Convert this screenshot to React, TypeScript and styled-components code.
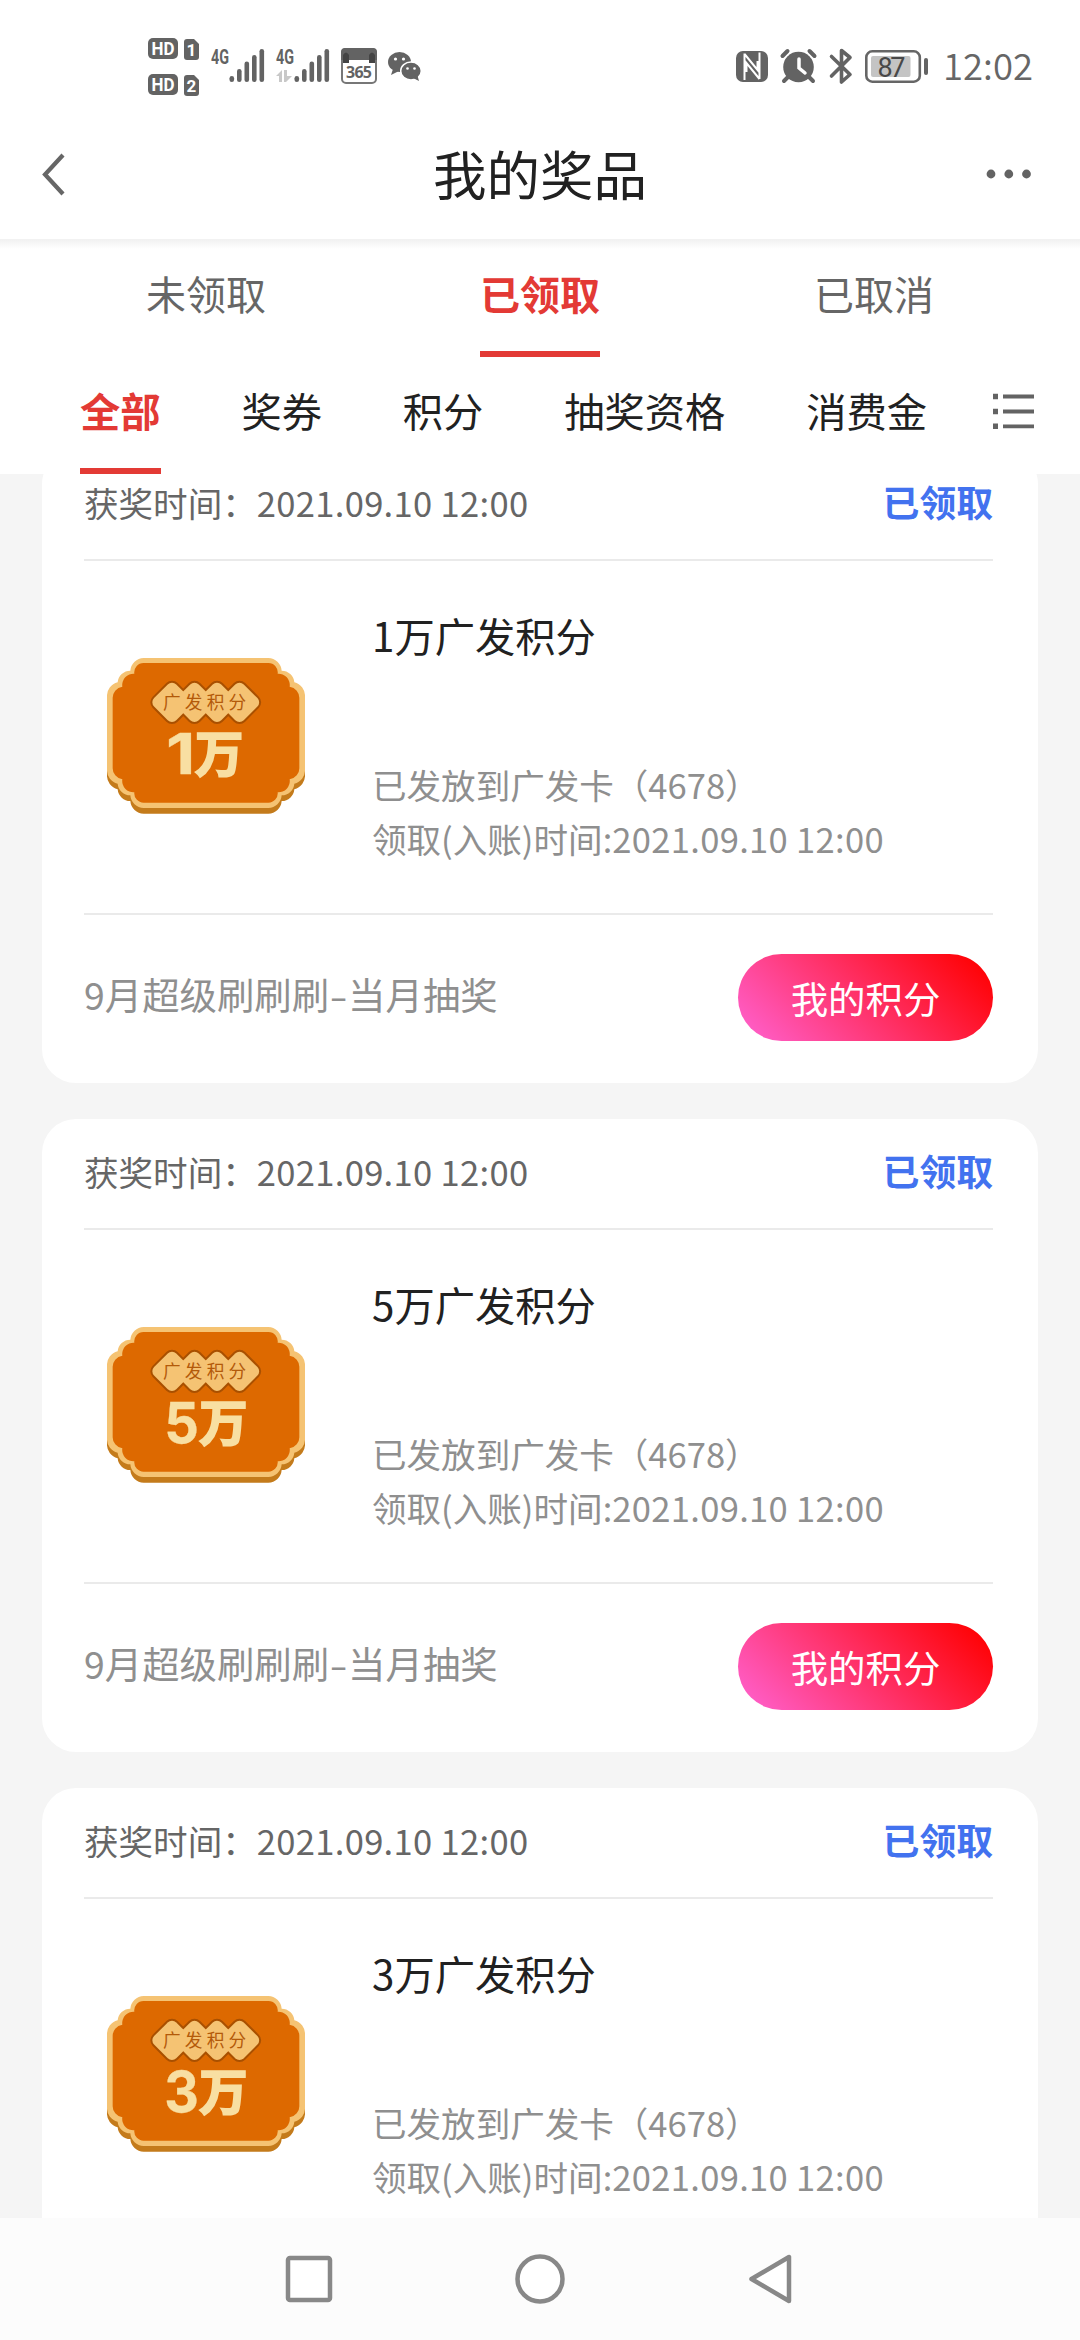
import React from "react";
import styled, { createGlobalStyle, css } from "styled-components";

const GlobalStyle = createGlobalStyle`
  * { box-sizing: border-box; }
  body {
    margin: 0;
    background: #f5f5f5;
    font-family: "Noto Sans CJK SC", "Noto Sans", sans-serif;
  }
`;

const Screen = styled.div`
  width: 1080px;
  height: 2340px;
  display: flex;
  flex-direction: column;
  overflow: hidden;
  background: #f5f5f5;
`;

const StatusBar = styled.div`
  flex: none;
  height: 112px;
  display: flex;
  justify-content: space-between;
  padding: 0 49px 0 148px;
  background: #fff;
`;

const StatusGroup = styled.div<{ $gap: number }>`
  display: flex;
  gap: ${(p) => p.$gap}px;
`;

const Glyph = styled.svg`
  display: block;
  flex: none;
  overflow: visible;
  fill: #636363;
`;

const Clock = styled.div`
  width: 88px;
  margin-left: 1px;
  font-family: "Noto Sans CJK SC", sans-serif;
  font-weight: 350;
  font-size: 36.5px;
  line-height: 130px;
  letter-spacing: 0;
  white-space: nowrap;
  color: #666;
`;

const Header = styled.header`
  flex: none;
  height: 128px;
  display: flex;
  align-items: center;
  justify-content: space-between;
  padding: 0 48px 0 41px;
  background: #fff;
  border-bottom: 1px solid #f2f2f2;
`;

const Title = styled.h1`
  margin: 0;
  padding: 0 0 5px 28px;
  font-weight: 400;
  font-size: 53.5px;
  line-height: 80px;
  color: #212121;
`;

const Tabs = styled.nav`
  flex: none;
  height: 117px;
  display: grid;
  grid-template-columns: repeat(3, 334px);
  justify-content: center;
  justify-items: center;
  background: linear-gradient(#f2f2f2, #fff 9px);
`;

const activeText = css`
  color: #e33a35;
  font-weight: 700;
  border-bottom-color: #e33a35;
`;

const Tab = styled.div<{ $active?: boolean }>`
  height: 117px;
  padding-top: 21px;
  font-size: 40px;
  line-height: 64px;
  color: #666;
  border-bottom: 6px solid transparent;
  ${(p) => p.$active && activeText}
`;

const Filters = styled.nav`
  flex: none;
  height: 117px;
  display: flex;
  justify-content: space-between;
  padding: 0 45px 0 80px;
  background: #fff;
`;

const FilterList = styled.div`
  display: flex;
  gap: 80.8px;
`;

const Filter = styled.div<{ $active?: boolean }>`
  height: 117px;
  padding-top: 21px;
  font-size: 40.3px;
  line-height: 64px;
  color: #212121;
  white-space: nowrap;
  border-bottom: 6px solid transparent;
  ${(p) => p.$active && activeText}
`;

const Feed = styled.main`
  flex: 1;
  min-height: 0;
  overflow: hidden;
  padding: 0 42px;
`;

const Cards = styled.div`
  display: flex;
  flex-direction: column;
  gap: 36px;
  margin-top: -24px;
`;

const Card = styled.article`
  height: 633px;
  flex: none;
  padding: 0 45px 0 42px;
  border-radius: 34px;
  background: #fff;
`;

const CardHead = styled.div`
  height: 111px;
  display: flex;
  align-items: center;
  justify-content: space-between;
  padding-bottom: 5px;
  border-bottom: 2px solid #eaeaea;
`;

const WonAt = styled.div`
  font-size: 34.56px;
  line-height: 52px;
  color: #666;
`;

const Stamp = styled.span`
  letter-spacing: 0.32px;
`;

const State = styled.div`
  font-size: 36.8px;
  font-weight: 700;
  line-height: 56px;
  padding-bottom: 2px;
  color: #4272ef;
`;

const CardBody = styled.div`
  height: 354px;
  display: flex;
  border-bottom: 2px solid #eaeaea;
`;

const Badge = styled.svg`
  display: block;
  flex: none;
  width: 198px;
  height: 156px;
  margin: 97px 67px 0 23px;
`;

const Details = styled.div`
  padding-top: 44px;
`;

const PrizeName = styled.h2`
  margin: 0 0 92px;
  font-weight: 400;
  font-size: 40.3px;
  line-height: 60px;
  color: #212121;
`;

const DetailLine = styled.div`
  font-size: 34.56px;
  line-height: 54px;
  color: #8f8f8f;
  white-space: nowrap;
`;

const CardFoot = styled.div`
  height: 168px;
  display: flex;
  align-items: center;
  justify-content: space-between;
  padding-bottom: 3px;
`;

const Activity = styled.div`
  font-size: 37.4px;
  line-height: 56px;
  padding-bottom: 7px;
  color: #8f8f8f;
`;

const Dash = styled.span`
  display: inline-block;
  margin: 0 3px;
  transform: scaleX(1.4);
`;

const PointsButton = styled.button`
  width: 255px;
  height: 87px;
  padding: 0;
  border: 0;
  border-radius: 44px;
  font: 400 37.4px/86px "Noto Sans CJK SC", sans-serif;
  color: #fff;
  background: linear-gradient(45deg, #ff63d2, #ff0000 96%);
`;

const NavBar = styled.footer`
  flex: none;
  height: 122px;
  display: flex;
  align-items: center;
  justify-content: center;
  gap: 180px;
  background: #fcfcfc;
`;

const NavIcon = styled.svg`
  display: block;
  fill: #fff;
  stroke: #888;
  stroke-width: 4.5;
  stroke-linejoin: round;
`;

const HdSim = () => (
  <Glyph width="52" height="112" viewBox="148 0 52 112">
    {[38, 74].map((y, i) => (
      <g key={y}>
        <rect x="148" y={y} width="30" height="21" rx="5" />
        <path d={`M187 ${y + 1}h7l5 5v13q0 3-3 3h-9q-3 0-3-3v-15q0-3 3-3z`} />
        <text x="163" y={y + 17} fontSize="19" fontWeight="700" fontFamily="Roboto" textAnchor="middle" textLength="23" lengthAdjust="spacingAndGlyphs" fill="#fff">HD</text>
        <text x="191.5" y={y + 17.5} fontSize="17" fontWeight="700" fontFamily="Roboto" textAnchor="middle" fill="#fff">{i + 1}</text>
      </g>
    ))}
  </Glyph>
);

const Signal = ({ data }: { data?: boolean }) => (
  <Glyph width="54" height="112" viewBox="211 0 54 112">
    <text x="211" y="63.5" fontSize="20" fontWeight="700" fontFamily="Roboto" textLength="18" lengthAdjust="spacingAndGlyphs">4G</text>
    {[6, 13, 20.5, 27, 33].map((h, i) => (
      <rect key={h} x={229.5 + i * 7.5} y={82 - h} width="4.6" height={h} rx="2.3" />
    ))}
    {data && <path fill="#c8c8c8" d="M211 76l6-6v12h-3v-6zM219 70h3v6h5l-6 6h-2z" />}
  </Glyph>
);

const Calendar = () => (
  <Glyph width="36" height="112" viewBox="339 0 36 112">
    <rect x="340" y="49" width="34" height="34" rx="4" fill="#fff" stroke="#777" strokeWidth="2" />
    <path d="M339 60v-8q0-4 4-4h28q4 0 4 4v8z" />
    <path fill="#444" d="M341 63v-8q3-5 6 0v8zM367 63v-8q3-5 6 0v8z" />
    <text x="357" y="78" fontSize="16" fontWeight="700" fontFamily="Noto Sans" textAnchor="middle" textLength="26">365</text>
  </Glyph>
);

const WeChat = () => (
  <Glyph width="34" height="112" viewBox="386 0 34 112">
    <ellipse cx="397.500" cy="62" rx="11.500" ry="10" />
    <path d="M391 69l-2 6 8-4z" />
    <ellipse cx="409" cy="71" rx="10.300" ry="9" stroke="#fff" strokeWidth="1.500" />
    <path d="M411 78l6 3-2-7z" />
    <g fill="#fff">
      <circle cx="393.500" cy="59" r="1.600" />
      <circle cx="401.500" cy="59" r="1.600" />
      <circle cx="405.500" cy="68.500" r="1.300" />
      <circle cx="412.500" cy="68.500" r="1.300" />
    </g>
  </Glyph>
);

const Nfc = () => (
  <Glyph width="32" height="112" viewBox="736 0 32 112">
    <rect x="736" y="51" width="32" height="31" rx="7" />
    <path d="M744.500 53.500V80M744.500 54L757.500 70V61M759.500 79V52.500M759.500 79L746.500 63V72" fill="none" stroke="#fff" strokeWidth="2" />
  </Glyph>
);

const Alarm = () => (
  <Glyph width="36" height="112" viewBox="780 0 36 112">
    <circle cx="797.500" cy="67" r="15.300" />
    <path d="M781.500 56l5-5M813.500 56l-5-5M787 77l-4 4M808 77l4 4" stroke="#636363" strokeWidth="4" strokeLinecap="round" />
    <path d="M798 59v9l6 5" fill="none" stroke="#fff" strokeWidth="3.500" strokeLinecap="round" />
  </Glyph>
);

const Bluetooth = () => (
  <Glyph width="22" height="112" viewBox="827 0 22 112">
    <path d="M828.500 56.500L847 74.500l-8.500 7.500V50.500l8.500 7L828.500 76" fill="none" stroke="#636363" strokeWidth="3.600" strokeLinejoin="round" strokeLinecap="round" />
  </Glyph>
);

const Battery = () => (
  <Glyph width="64" height="112" viewBox="863 0 64 112">
    <rect x="864.300" y="51.300" width="53.500" height="30.400" rx="6" fill="#fff" stroke="#666" strokeWidth="2.600" />
    <rect x="869" y="56" width="39.500" height="21" rx="2" fill="#c4c4c4" />
    <rect x="922" y="58" width="4" height="17" rx="2" />
    <text x="889.500" y="76.500" fontSize="27" fontFamily="Roboto" textAnchor="middle" textLength="28" fill="#484848">87</text>
  </Glyph>
);

const OUTER =
  "M190 84H564A41 41 0 0 1 604 122A38 38 0 0 1 642 157A42 42 0 0 1 674 200V418A42 42 0 0 1 642 461A38 38 0 0 1 604 496A41 41 0 0 1 564 534H190A41 41 0 0 1 150 496A38 38 0 0 1 112 461A42 42 0 0 1 80 418V200A42 42 0 0 1 112 157A38 38 0 0 1 150 122A41 41 0 0 1 190 84Z";
const INNER =
  "M190 99H564A28 28 0 0 1 592 131A34 34 0 0 1 628 170A34 34 0 0 1 657 205V413A34 34 0 0 1 628 448A34 34 0 0 1 592 487A28 28 0 0 1 564 518H190A28 28 0 0 1 162 487A34 34 0 0 1 126 448A34 34 0 0 1 97 413V205A34 34 0 0 1 126 170A34 34 0 0 1 162 131A28 28 0 0 1 190 99Z";
const DIAMONDS = [275, 342.500, 410, 477.500];

const PrizeBadge = ({ amount }: { amount: number }) => {
  const narrow = amount === 1;
  return (
    <Badge viewBox="80 84 594 468">
      <path d={OUTER} fill="#c47b1b" transform="translate(0 17)" />
      <path d={OUTER} fill="#f5c373" />
      <path d={INNER} fill="#dd6900" />
      {["#a95000", "#f5c373"].map((color, layer) =>
        DIAMONDS.map((cx) => (
          <rect
            key={`${layer}-${cx}`}
            x={cx - 47}
            y={217 - 47}
            width="94"
            height="94"
            rx="18"
            fill={color}
            stroke={color}
            strokeWidth={layer === 0 ? 12 : 0}
            transform={`rotate(45 ${cx} 217)`}
          />
        ))
      )}
      <text x="248" y="237" fontSize="53" letterSpacing="12.500" fill="#b35a0a">广发积分</text>
      <g fill="#f8dfa2" stroke="#f8dfa2" fontWeight="700">
        <text
          x={narrow ? 257 : 252}
          y="432"
          fontSize="170"
          fontFamily="Inter"
          strokeWidth="1"
          textLength={narrow ? 88 : 104}
          lengthAdjust="spacingAndGlyphs"
        >
          {amount}
        </text>
        <text x={narrow ? 344 : 357} y="427" fontSize="145" strokeWidth="6">万</text>
      </g>
    </Badge>
  );
};

const PrizeCard = ({ amount, footer }: { amount: number; footer: boolean }) => (
  <Card>
    <CardHead>
      <WonAt>获奖时间：<Stamp>2021.09.10 12:00</Stamp></WonAt>
      <State>已领取</State>
    </CardHead>
    <CardBody>
      <PrizeBadge amount={amount} />
      <Details>
        <PrizeName>{amount}万广发积分</PrizeName>
        <DetailLine>已发放到广发卡（4678）</DetailLine>
        <DetailLine>领取(入账)时间:<Stamp>2021.09.10 12:00</Stamp></DetailLine>
      </Details>
    </CardBody>
    {footer && (
      <CardFoot>
        <Activity>9月超级刷刷刷<Dash>-</Dash>当月抽奖</Activity>
        <PointsButton>我的积分</PointsButton>
      </CardFoot>
    )}
  </Card>
);

const PRIZES = [
  { amount: 1, footer: true },
  { amount: 5, footer: true },
  { amount: 3, footer: false },
];

export default function App() {
  return (
    <>
      <GlobalStyle />
      <Screen>
        <StatusBar>
          <StatusGroup $gap={11}>
            <HdSim />
            <Signal />
            <Signal data />
            <Calendar />
            <WeChat />
          </StatusGroup>
          <StatusGroup $gap={13}>
            <Nfc />
            <Alarm />
            <Bluetooth />
            <Battery />
            <Clock>12:02</Clock>
          </StatusGroup>
        </StatusBar>
        <Header>
          <Glyph width="25" height="48" viewBox="0 0 25 48">
            <path d="M22 3L4 22.500L22 42" fill="none" stroke="#666" strokeWidth="4.200" />
          </Glyph>
          <Title>我的奖品</Title>
          <Glyph width="46" height="12" viewBox="0 2 46 12">
            <circle cx="5" cy="6" r="4.400" />
            <circle cx="22.800" cy="6" r="4.400" />
            <circle cx="40.500" cy="6" r="4.400" />
          </Glyph>
        </Header>
        <Tabs>
          <Tab>未领取</Tab>
          <Tab $active>已领取</Tab>
          <Tab>已取消</Tab>
        </Tabs>
        <Filters>
          <FilterList>
            <Filter $active>全部</Filter>
            <Filter>奖券</Filter>
            <Filter>积分</Filter>
            <Filter>抽奖资格</Filter>
            <Filter>消费金</Filter>
          </FilterList>
          <Glyph width="42" height="117" viewBox="993 357 42 117">
            {[396.500, 411.500, 426.300].map((y) => (
              <path key={y} d={`M993 ${y - 2.700}h5v5.400h-5zM1003 ${y - 1.900}h31v3.800h-31z`} />
            ))}
          </Glyph>
        </Filters>
        <Feed>
          <Cards>
            {PRIZES.map((prize) => (
              <PrizeCard key={prize.amount} {...prize} />
            ))}
          </Cards>
        </Feed>
        <NavBar>
          <NavIcon width="50" height="52" viewBox="0 0 50 52">
            <rect x="4" y="5" width="42" height="42" rx="2" />
          </NavIcon>
          <NavIcon width="52" height="52" viewBox="0 0 52 52">
            <circle cx="26" cy="26" r="22.500" />
          </NavIcon>
          <NavIcon width="50" height="52" viewBox="0 0 50 52">
            <path d="M5.500 26L43 4V48Z" />
          </NavIcon>
        </NavBar>
      </Screen>
    </>
  );
}
